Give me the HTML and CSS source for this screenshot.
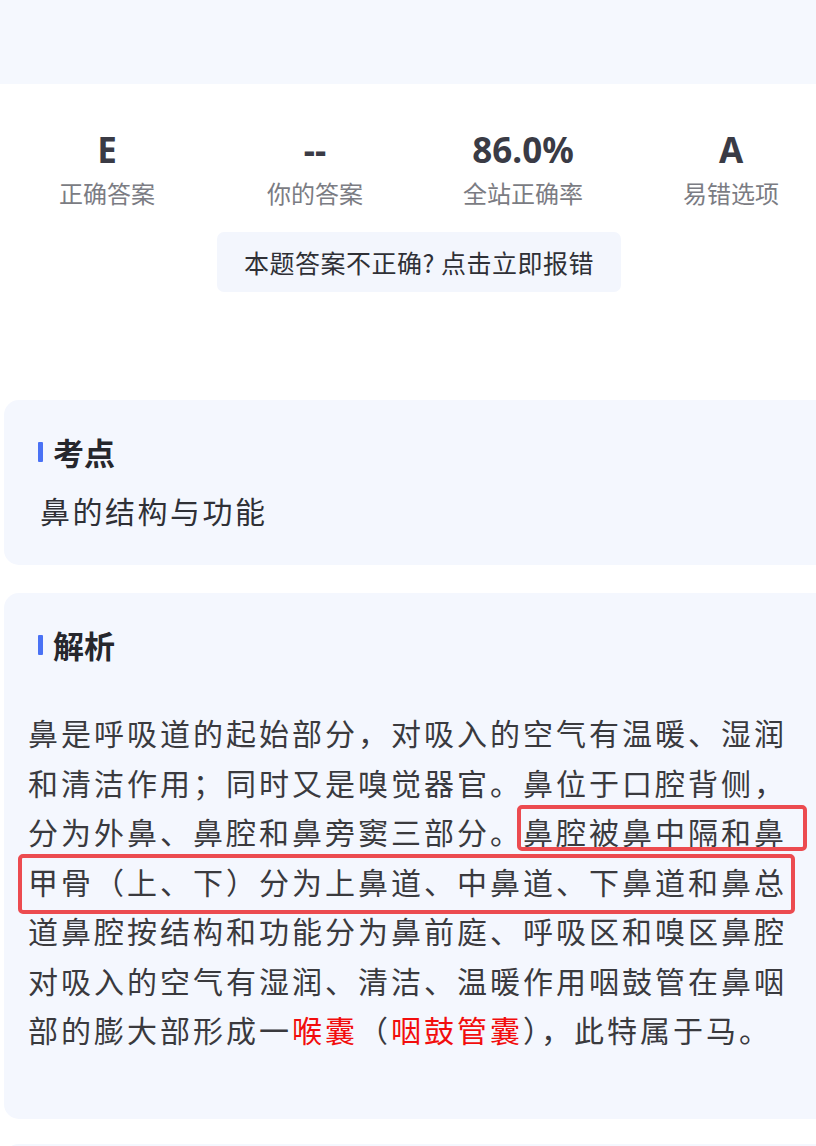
FILE: index.html
```html
<!DOCTYPE html>
<html lang="zh-CN">
<head>
<meta charset="utf-8">
<title>答案解析</title>
<link rel="stylesheet" href="styles.css">
</head>
<body>
<div class="page">
  <div class="top-band"></div>

  <section class="summary">
    <div class="stats">
      <div class="stat"><div class="stat-value">E</div><div class="stat-label">正确答案</div></div>
      <div class="stat"><div class="stat-value">--</div><div class="stat-label">你的答案</div></div>
      <div class="stat"><div class="stat-value">86.0%</div><div class="stat-label">全站正确率</div></div>
      <div class="stat"><div class="stat-value">A</div><div class="stat-label">易错选项</div></div>
    </div>
    <div class="report-row">
      <button class="report-btn" type="button">本题答案不正确? 点击立即报错</button>
    </div>
  </section>

  <section class="card card-point">
    <h2 class="card-title">考点</h2>
    <p class="point-text">鼻的结构与功能</p>
  </section>

  <section class="card card-analysis">
    <h2 class="card-title">解析</h2>
    <div class="analysis">
      <p class="analysis-text">鼻是呼吸道的起始部分，对吸入的空气有温暖、湿润和清洁作用；同时又是嗅觉器官。鼻位于口腔背侧，分为外鼻、鼻腔和鼻旁窦三部分。鼻腔被鼻中隔和鼻甲骨（上、下）分为上鼻道、中鼻道、下鼻道和鼻总道鼻腔按结构和功能分为鼻前庭、呼吸区和嗅区鼻腔对吸入的空气有湿润、清洁、温暖作用咽鼓管在鼻咽部的膨大部形成一<span class="hl">喉囊</span>（<span class="hl">咽鼓管囊</span>），此特属于马。</p>
      <span class="mark mark-1"></span>
      <span class="mark mark-2"></span>
    </div>
  </section>

  <section class="card card-next"></section>
</div>
</body>
</html>
```

FILE: styles.css
```css
html, body {
  margin: 0;
  padding: 0;
  width: 816px;
  overflow: hidden;
  background: #ffffff;
}

body {
  font-family: "Noto Sans CJK SC", "Noto Sans", sans-serif;
  color: #333333;
}

.page {
  display: flex;
  flex-direction: column;
  width: 816px;
}

.top-band {
  height: 84px;
  background: #f5f8fe;
}

.summary {
  width: 832px;
  margin-left: 3px;
  padding-top: 44px;
  display: flex;
  flex-direction: column;
}

.stats {
  display: grid;
  grid-template-columns: repeat(4, 208px);
}

.stat {
  display: flex;
  flex-direction: column;
  align-items: center;
  gap: 4px;
}

.stat-value {
  font-family: "Noto Sans", "Liberation Sans", sans-serif;
  font-weight: 700;
  font-size: 35px;
  line-height: 44px;
  color: #3a3b45;
}

.stat-label {
  font-size: 24px;
  line-height: 34px;
  color: #7b7c83;
}

.report-row {
  display: flex;
  justify-content: center;
  margin-top: 22px;
}

.report-btn {
  width: 404px;
  height: 60px;
  border: none;
  border-radius: 7px;
  background: #f3f6fd;
  font-family: "Noto Sans CJK SC", sans-serif;
  font-size: 25px;
  letter-spacing: 0.5px;
  color: #2f3036;
  padding: 0;
}

.card {
  margin-left: 4px;
  margin-right: -30px;
  background: #f4f7fe;
  border-radius: 15px;
}

.card-point {
  margin-top: 108px;
  padding: 32px 0 35px 34px;
}

.card-title {
  display: flex;
  align-items: center;
  gap: 10px;
  margin: 0;
  font-size: 31px;
  line-height: 40px;
  font-weight: 600;
  color: #26272d;
}

.card-title::before {
  content: "";
  width: 5px;
  height: 20px;
  background: #4a72f5;
  border-radius: 1px;
}

.point-text {
  margin: 18px 0 0 2px;
  font-size: 30px;
  line-height: 40px;
  letter-spacing: 2.5px;
  color: #2f3036;
}

.card-analysis {
  margin-top: 28px;
  padding: 32px 0 64px 24px;
}

.card-analysis .card-title {
  padding-left: 10px;
}

.analysis {
  position: relative;
  margin-top: 43px;
  width: 765px;
}

.analysis-text {
  margin: 0;
  font-size: 30px;
  line-height: 49.5px;
  letter-spacing: 3px;
  color: #3a3a3e;
}

.hl {
  color: #f20d0d;
}

.mark {
  position: absolute;
  border: 4px solid #ec4b50;
  border-radius: 5px;
  box-sizing: border-box;
}

.mark-1 {
  left: 489px;
  top: 97px;
  width: 290px;
  height: 46px;
}

.mark-2 {
  left: -10px;
  top: 146px;
  width: 777px;
  height: 60px;
}

.card-next {
  margin-top: 25px;
  height: 60px;
}
```
